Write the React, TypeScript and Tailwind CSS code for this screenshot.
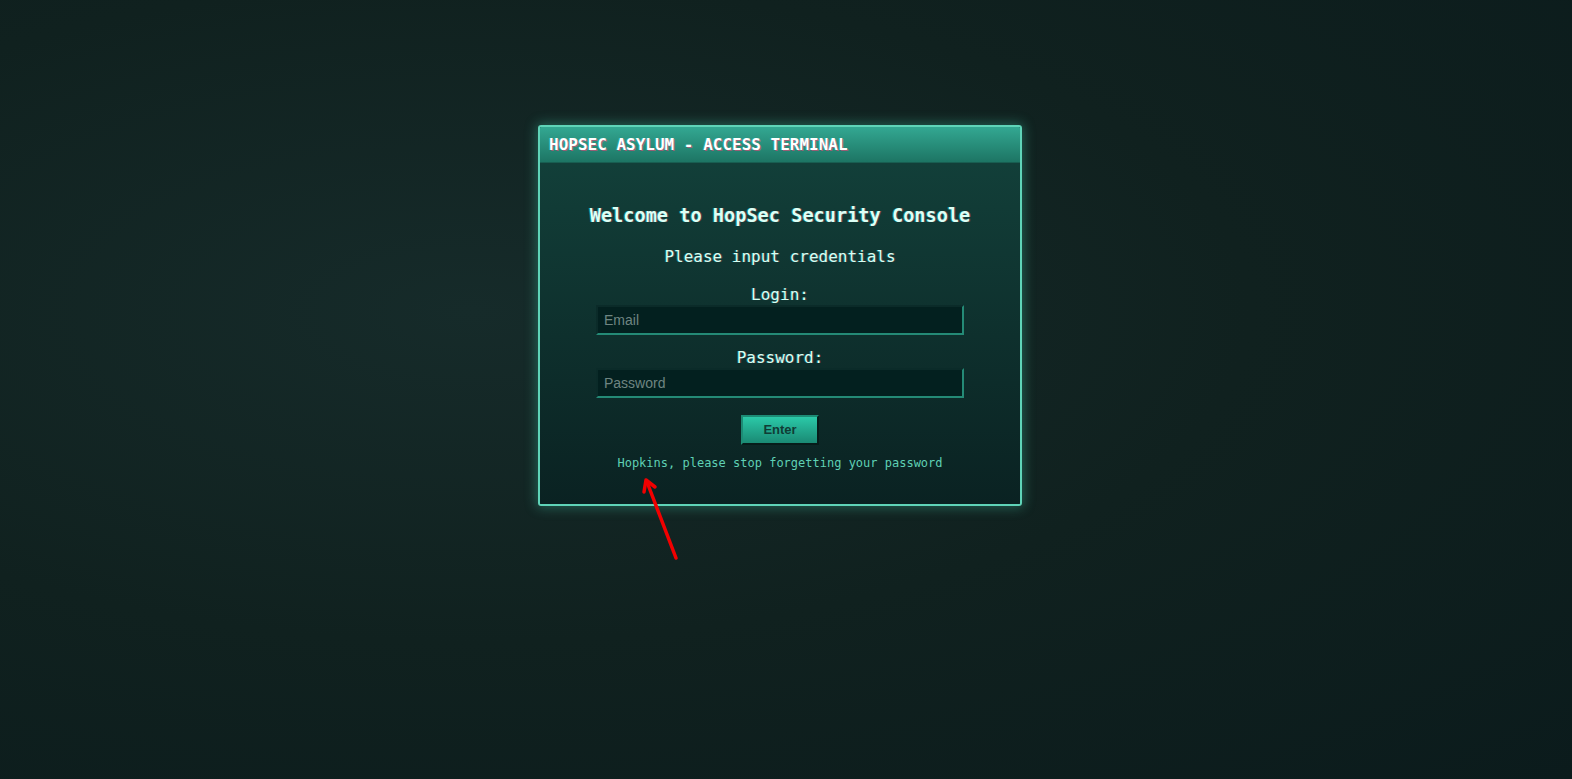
import React from "react";

export default function App() {
  return (
    <div className="relative w-full h-[779px] overflow-hidden bg-[radial-gradient(ellipse_at_30%_40%,#162b2a_0%,#10211f_50%,#0b1b1c_100%)] font-['DejaVu_Sans_Mono',monospace]">
      <div className="flex justify-center pt-[125px] pr-[12px]">
        <div className="w-[484px] rounded-[3px] border-2 border-[#5fd4b8] shadow-[0_0_12px_2px_rgba(70,200,170,0.35)] overflow-hidden">
          <div className="h-[36px] flex items-center px-[9px] bg-gradient-to-b from-[#33a892] to-[#1d7564] border-b border-[#185e51]">
            <span className="text-[16px] font-bold text-white [text-shadow:1px_1px_0_rgba(255,60,120,0.55),-1px_0_0_rgba(0,255,255,0.25)]">
              HOPSEC ASYLUM - ACCESS TERMINAL
            </span>
          </div>
          <div className="flex flex-col items-center px-[20px] pt-[42px] pb-[34px] bg-gradient-to-b from-[#123f39] to-[#0a2222]">
            <h3 className="whitespace-nowrap text-[18.6px] leading-[22px] font-bold text-[#dcfff5] [text-shadow:1px_0_0_rgba(255,60,120,0.4),-1px_0_0_rgba(0,255,230,0.4)]">
              Welcome to HopSec Security Console
            </h3>
            <p className="mt-[20px] text-[16px] leading-[19px] text-[#d6fff3] [text-shadow:1px_0_0_rgba(255,60,120,0.3),-1px_0_0_rgba(0,255,230,0.3)]">
              Please input credentials
            </p>
            <label className="mt-[19px] text-[16px] leading-[19px] text-[#d6fff3] [text-shadow:1px_0_0_rgba(255,60,120,0.3),-1px_0_0_rgba(0,255,230,0.3)]">
              Login:
            </label>
            <input
              type="text"
              placeholder="Email"
              className="mt-[1px] w-[368px] h-[30px] px-[6px] bg-[#03201f] border-2 border-t-[#0b2b29] border-l-[#0b2b29] border-b-[#248a76] border-r-[#248a76] text-[14px] font-['Liberation_Sans',Arial,sans-serif] text-[#cfe] placeholder:text-[#6f8582] outline-none"
            />
            <label className="mt-[13px] text-[16px] leading-[19px] text-[#d6fff3] [text-shadow:1px_0_0_rgba(255,60,120,0.3),-1px_0_0_rgba(0,255,230,0.3)]">
              Password:
            </label>
            <input
              type="password"
              placeholder="Password"
              className="mt-[1px] w-[368px] h-[30px] px-[6px] bg-[#03201f] border-2 border-t-[#0b2b29] border-l-[#0b2b29] border-b-[#248a76] border-r-[#248a76] text-[14px] font-['Liberation_Sans',Arial,sans-serif] text-[#cfe] placeholder:text-[#6f8582] outline-none"
            />
            <button className="mt-[17px] w-[78px] h-[30px] bg-gradient-to-b from-[#2bc9a8] to-[#1a8a74] border-2 border-t-[#1d8b75] border-l-[#1d8b75] border-b-[#071c1a] border-r-[#071c1a] text-[13px] font-bold font-['Liberation_Sans',Arial,sans-serif] text-[#103c35]">
              Enter
            </button>
            <p className="mt-[11px] text-[12px] leading-[14px] text-[#5fd0b4]">
              Hopkins, please stop forgetting your password
            </p>
          </div>
        </div>
      </div>
      <svg className="absolute left-0 top-0 pointer-events-none" width="1572" height="779">
        <line x1="676" y1="558" x2="647" y2="482" stroke="#f20000" strokeWidth="3.5" strokeLinecap="round" />
        <polyline points="644,492 646,480 655,487" fill="none" stroke="#f20000" strokeWidth="3.5" strokeLinecap="round" strokeLinejoin="round" />
      </svg>
    </div>
  );
}
